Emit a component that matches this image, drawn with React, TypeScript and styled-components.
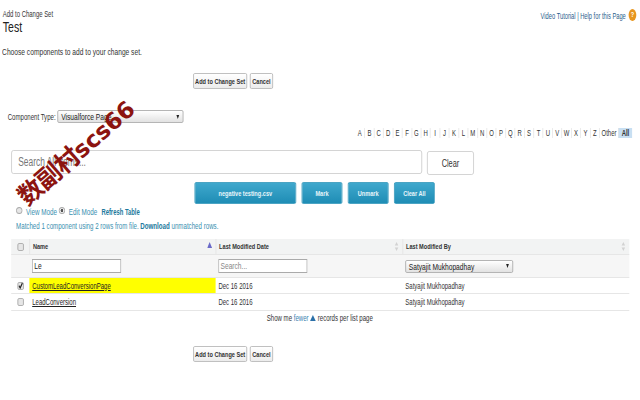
import React from 'react';
import styled, { createGlobalStyle } from 'styled-components';

const GlobalStyle = createGlobalStyle`
  html, body {
    margin: 0;
    padding: 0;
    background: #fff;
    overflow: hidden;
  }
  body {
    font-family: "Liberation Sans", Arial, sans-serif;
    font-size: 9px;
    color: #222;
  }
  * {
    box-sizing: border-box;
  }
`;

const Viewport = styled.div`
  position: relative;
  width: 640px;
  height: 400px;
  overflow: hidden;
`;

// the capture is squeezed sideways, so the page is laid out wider and scaled down
const Page = styled.div`
  width: 914px;
  height: 400px;
  padding-top: 9px;
  transform: scaleX(0.7);
  transform-origin: left top;
`;

const Header = styled.div`
  display: flex;
  justify-content: space-between;
  align-items: flex-start;
  height: 26px;
  padding: 0 5px 0 4px;
`;

const Crumb = styled.div`
  font-size: 8.5px;
  line-height: 10px;
  color: #333;
`;

const Title = styled.h1`
  margin: 0;
  font-size: 15px;
  line-height: 16px;
  font-weight: 400;
  color: #222;
`;

const HelpLinks = styled.div`
  display: flex;
  align-items: flex-start;
  gap: 4px;
  font-size: 8.2px;
  line-height: 12px;
  color: #2a5d8c;
`;

const HelpText = styled.span`
  margin-top: 2px;
`;

const HelpIcon = styled.span`
  width: 11px;
  height: 12px;
  border-radius: 50%;
  background: #e8961e;
  color: #fff;
  font-size: 8px;
  line-height: 12px;
  font-weight: 700;
  text-align: center;
`;

const Intro = styled.p`
  margin: 12px 0 0 3px;
  font-size: 9.5px;
  line-height: 10px;
  color: #333;
`;

const ButtonRow = styled.div<{ $top: number }>`
  display: flex;
  gap: 4px;
  margin: ${(p) => p.$top}px 0 0 276px;
`;

const PlainButton = styled.button<{ $width: number }>`
  width: ${(p) => p.$width}px;
  height: 16px;
  padding: 0;
  border: 1px solid #b5b5b5;
  border-radius: 2px;
  background: linear-gradient(#fff, #ececec);
  font: 700 8px "Liberation Sans", Arial, sans-serif;
  color: #333;
`;

const TypeRow = styled.div`
  display: flex;
  align-items: center;
  gap: 3px;
  margin: 21px 0 0 11px;
  font-size: 8.7px;
  color: #333;
`;

const SelectBox = styled.div<{ $width: number }>`
  display: flex;
  justify-content: space-between;
  align-items: center;
  width: ${(p) => p.$width}px;
  height: 13px;
  padding: 0 5px 0 4px;
  border: 1px solid #a8a8a8;
  border-radius: 2px;
  background: linear-gradient(#fff, #e2e2e2);
  font-size: 9.5px;
  color: #222;
`;

const Caret = styled.span`
  width: 0;
  height: 0;
  border-left: 2.5px solid transparent;
  border-right: 2.5px solid transparent;
  border-top: 4px solid #222;
`;

const Alphabet = styled.div`
  display: flex;
  justify-content: flex-end;
  align-items: center;
  margin: 5px 11px 0 0;
  font-size: 8.5px;
  line-height: 10px;
  color: #333;
`;

const Letter = styled.span<{ $width?: number; $active?: boolean }>`
  display: block;
  width: ${(p) => p.$width || 13.43}px;
  border-left: 1px solid #e2e2e2;
  text-align: center;
  font-weight: ${(p) => (p.$active ? 700 : 400)};
  background: ${(p) => (p.$active ? '#c8dff2' : 'transparent')};

  &:first-child {
    border-left: 0;
  }
`;

const SearchRow = styled.div`
  display: flex;
  align-items: flex-end;
  gap: 7px;
  height: 25px;
  margin: 12px 0 0 16px;
`;

const SearchBox = styled.div`
  align-self: flex-start;
  width: 587px;
  height: 24px;
  padding-left: 9px;
  border: 1px solid #ccc;
  border-radius: 3px;
  font-size: 12px;
  line-height: 22px;
  color: #777;
`;

const ClearButton = styled.button`
  width: 67px;
  height: 24px;
  padding: 0;
  border: 1px solid #ccc;
  border-radius: 3px;
  background: #fff;
  font: 10.5px "Liberation Sans", Arial, sans-serif;
  color: #333;
`;

const ActionRow = styled.div`
  display: flex;
  gap: 8px;
  margin: 7px 0 0 278px;
`;

const ActionButton = styled.button<{ $width: number }>`
  width: ${(p) => p.$width}px;
  height: 22px;
  padding: 0;
  border: 1px solid #2b93b8;
  border-radius: 2px;
  background: linear-gradient(#3fa8cd, #1f8db5);
  font: 700 8px "Liberation Sans", Arial, sans-serif;
  color: #e8f5fa;
`;

const ModeRow = styled.div`
  display: flex;
  align-items: center;
  margin: 3px 0 0 23px;
  font-size: 9px;
  line-height: 10px;
  color: #3a8fb0;
`;

const Radio = styled.span<{ $on?: boolean }>`
  width: 9px;
  height: 7px;
  margin: -3px 5px 0 0;
  border: 1px solid #aaa;
  border-radius: 50%;
  background: ${(p) => (p.$on ? 'radial-gradient(#555 35%, #eee 45%)' : '#e6e6e6')};
`;

const ModeLabel = styled.span`
  margin-right: 3px;
`;

const StrongLink = styled.span`
  font-weight: 700;
  color: #21789c;
`;

const RefreshLink = styled(StrongLink)`
  margin-left: 3px;
  font-size: 8.4px;
`;

const MatchNote = styled.div`
  margin: 4px 0 0 23px;
  font-size: 8.8px;
  line-height: 10px;
  color: #3a8fb0;
`;

const Table = styled.div`
  width: 883px;
  margin: 8px 0 0 16px;
`;

const Row = styled.div<{ $bg?: string; $height: number }>`
  display: grid;
  grid-template-columns: 26px 266px 267px 1fr;
  height: ${(p) => p.$height}px;
  background: ${(p) => p.$bg || '#fff'};
  border-bottom: 1px solid #e6e6e6;
`;

const HeadCell = styled.div`
  display: flex;
  justify-content: space-between;
  align-items: center;
  padding: 0 5px 0 4px;
  border-left: 1px solid #e2e2e2;
  font-size: 8px;
  font-weight: 700;
  color: #333;

  & > svg {
    align-self: flex-start;
    margin-top: 3px;
  }
`;

const Cell = styled.div<{ $hl?: boolean }>`
  display: flex;
  align-items: center;
  padding-left: 4px;
  font-size: 8.6px;
  color: #333;
  background: ${(p) => (p.$hl ? '#ffff00' : 'transparent')};
`;

const CheckCell = styled.div`
  display: flex;
  align-items: center;
  justify-content: center;
`;

const Check = styled.span`
  display: flex;
  align-items: center;
  justify-content: center;
  width: 9px;
  height: 8px;
  border: 1px solid #a5a5a5;
  border-radius: 2px;
  background: #e6e6e6;
`;

const FilterInput = styled.div<{ $muted?: boolean }>`
  width: 127px;
  height: 14px;
  padding-left: 2px;
  border: 1px solid #aaa;
  background: #fff;
  font-size: 9.5px;
  line-height: 12px;
  color: ${(p) => (p.$muted ? '#888' : '#222')};
`;

const RowLink = styled.span`
  text-decoration: underline;
  color: #222;
`;

const PageSize = styled.div`
  margin: 2px 0 0 381px;
  font-size: 8.7px;
  line-height: 10px;
  color: #333;
`;

const FewerLink = styled.span`
  color: #3a7fb0;
`;

const UpArrow = styled.span`
  display: inline-block;
  margin: 0 3px 0 2px;
  border-left: 4px solid transparent;
  border-right: 4px solid transparent;
  border-bottom: 6px solid #2a6fa8;
`;

const Watermark = styled.div`
  position: absolute;
  left: 21px;
  top: 183px;
  display: flex;
  align-items: baseline;
  white-space: nowrap;
  color: #8c1410;
  transform: rotate(-41deg);
  transform-origin: left center;
`;

const WatermarkHan = styled.span`
  font-family: "Noto Sans CJK SC", sans-serif;
  font-size: 25px;
  line-height: 30px;
  font-weight: 700;
  letter-spacing: -1px;
`;

const WatermarkLatin = styled.span`
  font-family: "DejaVu Sans", sans-serif;
  font-size: 23px;
  line-height: 30px;
  font-weight: 700;
`;

const SortIcon = ({ active }: { active?: boolean }) =>
  active ? (
    <svg width="7" height="6" viewBox="0 0 7 6">
      <path d="M3.5 0 7 6H0z" fill="#6a6ac8" />
    </svg>
  ) : (
    <svg width="7" height="9" viewBox="0 0 7 9">
      <path d="M3.5 0 6 3.6H1zM3.5 9 1 5.4h5z" fill="#d2d2d2" />
    </svg>
  );

const Tick = () => (
  <svg width="7" height="7" viewBox="0 0 7 7">
    <path d="M1 3.6 2.8 6 6 1" fill="none" stroke="#222" strokeWidth="1.5" />
  </svg>
);

const letters = 'ABCDEFGHIJKLMNOPQRSTUVWXYZ'.split('');

export default function App() {
  return (
    <Viewport>
      <GlobalStyle />
      <Page>
        <Header>
          <div>
            <Crumb>Add to Change Set</Crumb>
            <Title>Test</Title>
          </div>
          <HelpLinks>
            <HelpText>Video Tutorial | Help for this Page</HelpText>
            <HelpIcon>?</HelpIcon>
          </HelpLinks>
        </Header>
        <Intro>Choose components to add to your change set.</Intro>
        <ButtonRow $top={16}>
          <PlainButton $width={77}>Add to Change Set</PlainButton>
          <PlainButton $width={33}>Cancel</PlainButton>
        </ButtonRow>
        <TypeRow>
          <span>Component Type:</span>
          <SelectBox $width={180}>
            <span>Visualforce Page</span>
            <Caret />
          </SelectBox>
        </TypeRow>
        <Alphabet>
          {letters.map((l) => (
            <Letter key={l}>{l}</Letter>
          ))}
          <Letter $width={27}>Other</Letter>
          <Letter $width={20} $active>
            All
          </Letter>
        </Alphabet>
        <SearchRow>
          <SearchBox>Search All Items...</SearchBox>
          <ClearButton>Clear</ClearButton>
        </SearchRow>
        <ActionRow>
          <ActionButton $width={145}>negative testing.csv</ActionButton>
          <ActionButton $width={58}>Mark</ActionButton>
          <ActionButton $width={58}>Unmark</ActionButton>
          <ActionButton $width={58}>Clear All</ActionButton>
        </ActionRow>
        <ModeRow>
          <Radio />
          <ModeLabel>View Mode</ModeLabel>
          <Radio $on />
          <ModeLabel>Edit Mode</ModeLabel>
          <RefreshLink>Refresh Table</RefreshLink>
        </ModeRow>
        <MatchNote>
          Matched 1 component using 2 rows from file. <StrongLink>Download</StrongLink> unmatched rows.
        </MatchNote>
        <Table>
          <Row $bg="#f2f3f3" $height={16}>
            <CheckCell>
              <Check />
            </CheckCell>
            <HeadCell>
              Name
              <SortIcon active />
            </HeadCell>
            <HeadCell>
              Last Modified Date
              <SortIcon />
            </HeadCell>
            <HeadCell>
              Last Modified By
              <SortIcon />
            </HeadCell>
          </Row>
          <Row $bg="#f6f6f6" $height={23}>
            <div />
            <Cell>
              <FilterInput>Le</FilterInput>
            </Cell>
            <Cell>
              <FilterInput $muted>Search...</FilterInput>
            </Cell>
            <Cell>
              <SelectBox $width={154}>
                <span>Satyajit Mukhopadhay</span>
                <Caret />
              </SelectBox>
            </Cell>
          </Row>
          <Row $height={16}>
            <CheckCell>
              <Check>
                <Tick />
              </Check>
            </CheckCell>
            <Cell $hl>
              <RowLink>CustomLeadConversionPage</RowLink>
            </Cell>
            <Cell>Dec 16 2016</Cell>
            <Cell>Satyajit Mukhopadhay</Cell>
          </Row>
          <Row $height={17}>
            <CheckCell>
              <Check />
            </CheckCell>
            <Cell>
              <RowLink>LeadConversion</RowLink>
            </Cell>
            <Cell>Dec 16 2016</Cell>
            <Cell>Satyajit Mukhopadhay</Cell>
          </Row>
        </Table>
        <PageSize>
          Show me <FewerLink>fewer</FewerLink>
          <UpArrow />
          records per list page
        </PageSize>
        <ButtonRow $top={23}>
          <PlainButton $width={77}>Add to Change Set</PlainButton>
          <PlainButton $width={33}>Cancel</PlainButton>
        </ButtonRow>
      </Page>
      <Watermark>
        <WatermarkHan>数副村</WatermarkHan>
        <WatermarkLatin>scs66</WatermarkLatin>
      </Watermark>
    </Viewport>
  );
}
